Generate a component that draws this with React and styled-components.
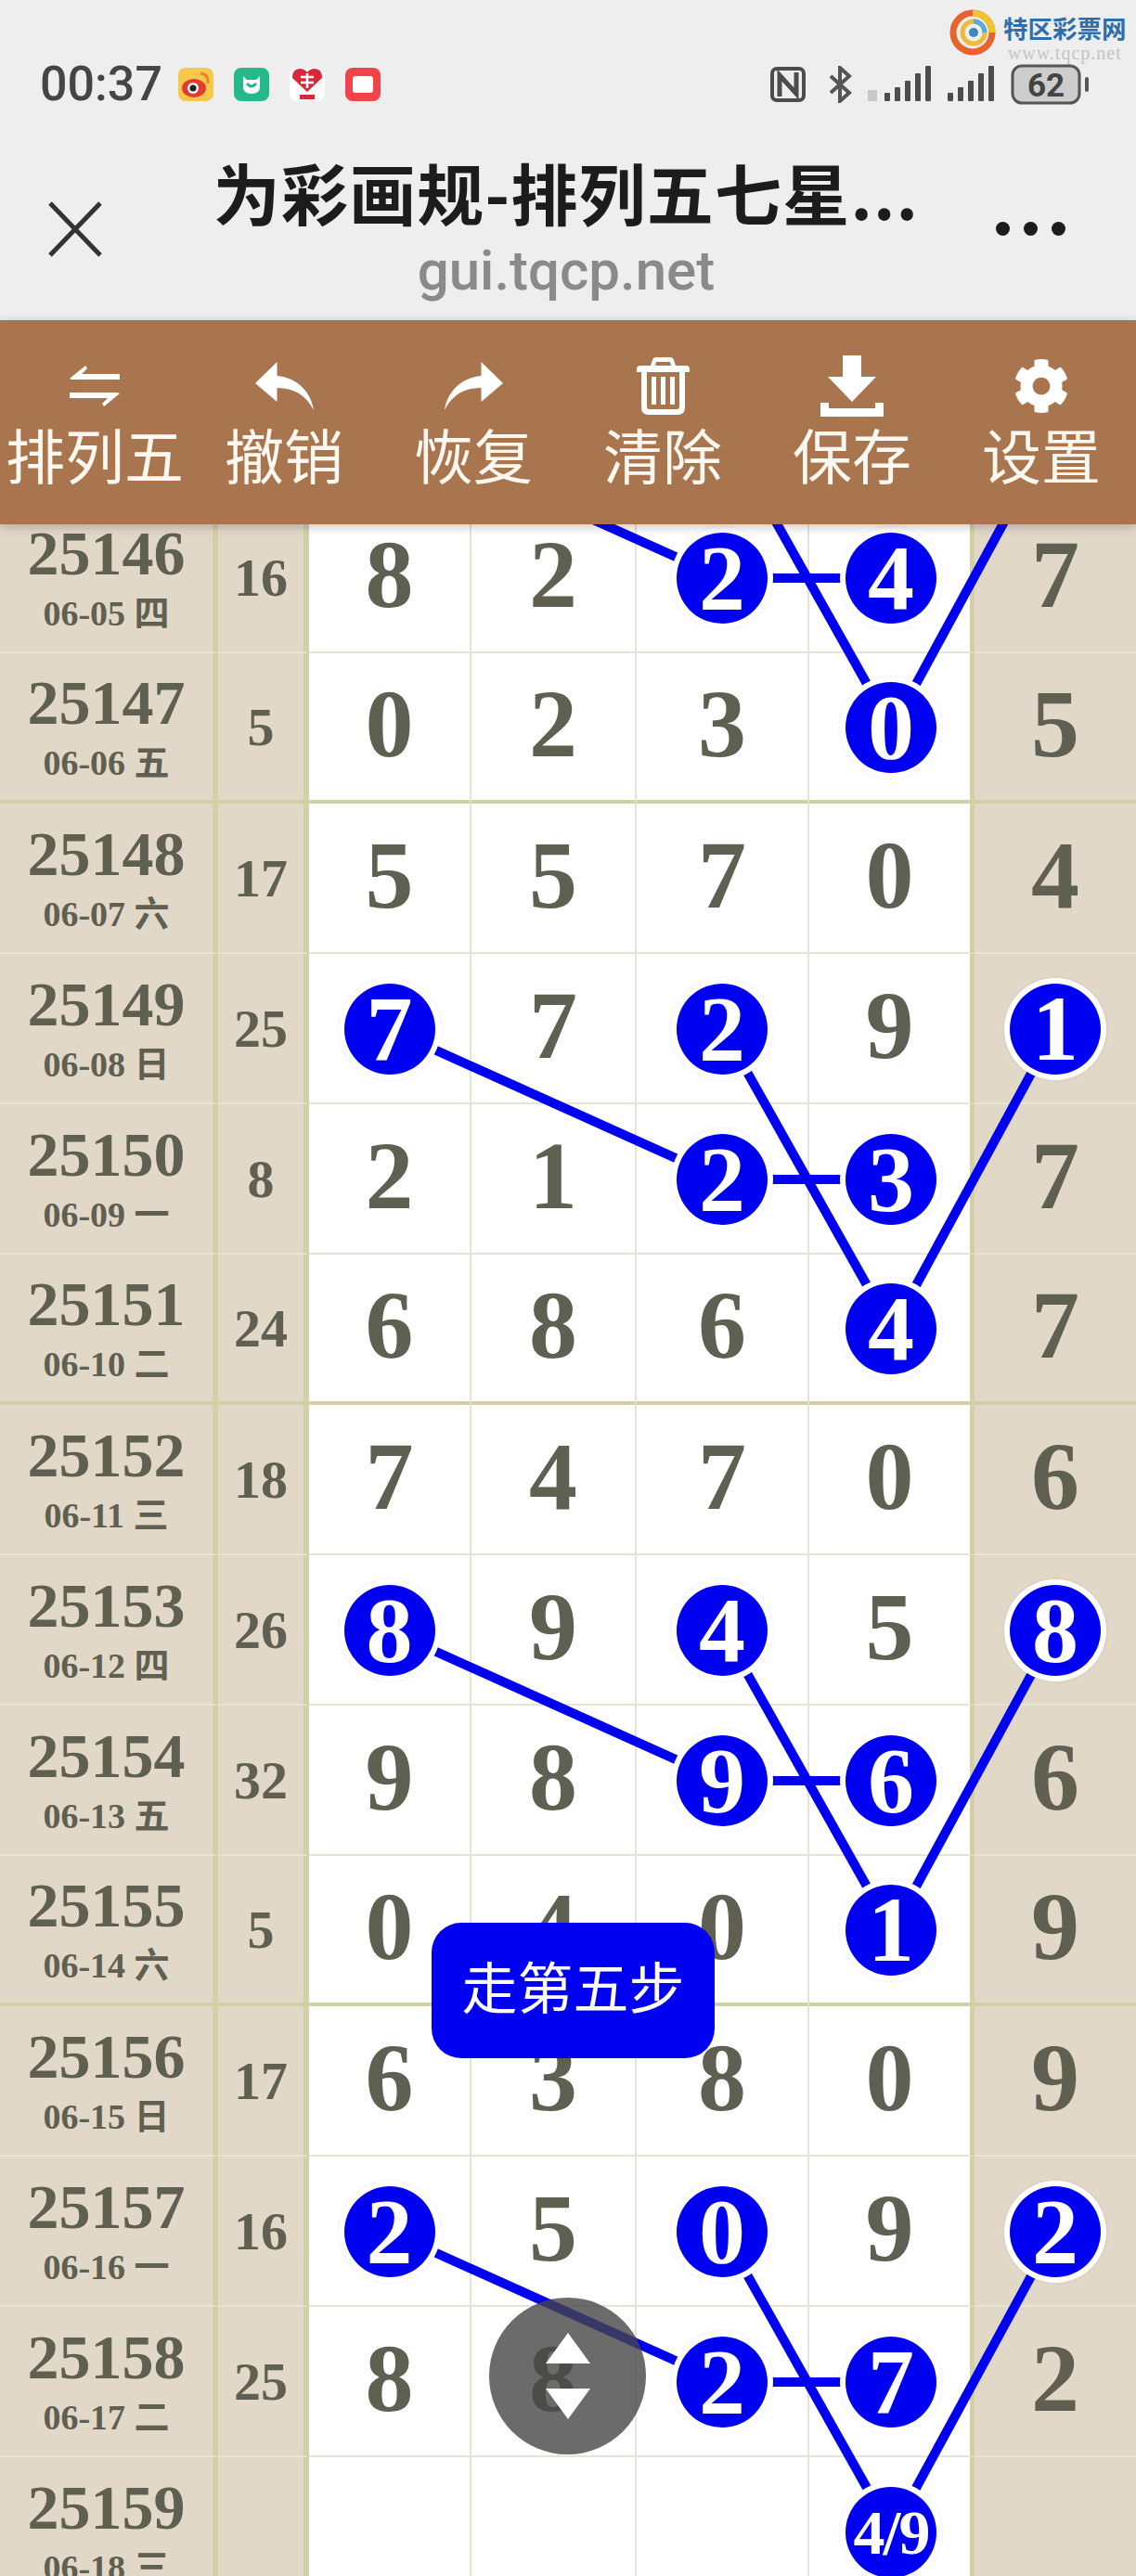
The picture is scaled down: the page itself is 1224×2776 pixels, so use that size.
import React from 'react';
import styled, { createGlobalStyle } from 'styled-components';
import { FaCog } from 'react-icons/fa';

const BLUE = '#0000f0';
const BEIGE = '#e2d8c8';
const INK = '#5f5f52';
const OLIVE = '#d3cfa6';
const SERIF = '"Liberation Serif", "Noto Sans CJK SC", serif';
const SANS = '"Noto Sans CJK SC", "Noto Sans", sans-serif';

const rows = [
  { no: '25146', date: '06-05 四', sum: '16', nums: ['8', '2', '*2', '*4', '7'] },
  { no: '25147', date: '06-06 五', sum: '5', nums: ['0', '2', '3', '*0', '5'], heavy: true },
  { no: '25148', date: '06-07 六', sum: '17', nums: ['5', '5', '7', '0', '4'] },
  { no: '25149', date: '06-08 日', sum: '25', nums: ['*7', '7', '*2', '9', '*1'] },
  { no: '25150', date: '06-09 一', sum: '8', nums: ['2', '1', '*2', '*3', '7'] },
  { no: '25151', date: '06-10 二', sum: '24', nums: ['6', '8', '6', '*4', '7'], heavy: true },
  { no: '25152', date: '06-11 三', sum: '18', nums: ['7', '4', '7', '0', '6'] },
  { no: '25153', date: '06-12 四', sum: '26', nums: ['*8', '9', '*4', '5', '*8'] },
  { no: '25154', date: '06-13 五', sum: '32', nums: ['9', '8', '*9', '*6', '6'] },
  { no: '25155', date: '06-14 六', sum: '5', nums: ['0', '4', '0', '*1', '9'], heavy: true },
  { no: '25156', date: '06-15 日', sum: '17', nums: ['6', '3', '8', '0', '9'] },
  { no: '25157', date: '06-16 一', sum: '16', nums: ['*2', '5', '*0', '9', '*2'] },
  { no: '25158', date: '06-17 二', sum: '25', nums: ['8', '8', '*2', '*7', '2'] },
  { no: '25159', date: '06-18 三', sum: '', nums: ['', '', '', '*4/9', ''] },
];

// chart coordinates, relative to the board
const ROW_H = 162;
const FIRST_ROW_TOP = -23;
const colX = { a: 419, c: 779, d: 961, e: 1137 };
const rowY = (i) => FIRST_ROW_TOP + ROW_H * i + ROW_H / 2;

// index of the row holding the top balls of each walk (-1 lies under the toolbar)
const walks = [-1, 3, 7, 11];

const GlobalStyle = createGlobalStyle`
  html, body {
    margin: 0;
    padding: 0;
    background: #fff;
  }
`;

const Page = styled.div`
  position: relative;
  display: flex;
  flex-direction: column;
  width: 1224px;
  height: 2776px;
  overflow: hidden;
`;

const Header = styled.header`
  height: 345px;
  box-sizing: border-box;
  background: #eeeeee;
  border-bottom: 5px solid #e9eef3;
`;

const StatusBar = styled.div`
  display: flex;
  justify-content: space-between;
  align-items: center;
  height: 44px;
  padding: 69px 51px 0 43px;
`;

const StatusGroup = styled.div`
  display: flex;
  align-items: center;
  gap: ${(p) => p.$gap || 22}px;
`;

const Clock = styled.span`
  font: 500 52px/44px Roboto, sans-serif;
  color: #454545;
  margin-right: -5px;
`;

const NfcIcon = styled.svg`
  margin-right: 8px;
`;

const Logo = styled.div`
  position: absolute;
  top: 10px;
  left: 1023px;
  display: flex;
  gap: 8px;
`;

const LogoText = styled.div`
  display: flex;
  flex-direction: column;
  align-items: center;
  padding-top: 5px;
  b {
    font: 700 26.5px/30px ${SANS};
    color: #2f6ea8;
  }
  span {
    font: 400 20px/20px ${SERIF};
    letter-spacing: 1px;
    color: #c4c4c4;
    margin-top: 2px;
  }
`;

const TitleBar = styled.div`
  display: grid;
  grid-template-columns: 120px 1fr 120px;
  align-items: center;
  padding-top: 52px;
`;

const CloseIcon = styled.svg`
  width: 58px;
  height: 60px;
  margin: 0 0 0 52px;
`;

const TitleBlock = styled.div`
  display: flex;
  flex-direction: column;
  align-items: center;
  margin-left: -4px;
`;

const Title = styled.div`
  font: 700 72px/82px ${SANS};
  color: #1c1c1c;
  white-space: nowrap;
  letter-spacing: 1.2px;
`;

const Domain = styled.div`
  margin-top: 9px;
  font: 500 60px/72px Roboto, sans-serif;
  color: #8a8a8a;
`;

const MoreDots = styled.div`
  display: flex;
  gap: 15px;
  justify-content: center;
  margin-left: -107px;
  i {
    width: 15px;
    height: 15px;
    border-radius: 50%;
    background: #1c1c1c;
  }
`;

const Toolbar = styled.nav`
  position: relative;
  z-index: 4;
  display: grid;
  grid-template-columns: repeat(6, 1fr);
  height: 220px;
  box-sizing: border-box;
  padding-top: 37px;
  background: #a9754f;
  box-shadow: 0 3px 10px rgba(0, 0, 0, 0.22);
`;

const ToolItem = styled.div`
  display: flex;
  flex-direction: column;
  align-items: center;
  color: #fff;
`;

const ToolIcon = styled.div`
  display: flex;
  align-items: center;
  justify-content: center;
  height: 68px;
  svg {
    display: block;
    fill: #fff;
  }
`;

const ToolLabel = styled.span`
  margin-top: 2px;
  font: 400 64px/72px ${SANS};
  color: #fff8f0;
  white-space: nowrap;
`;

const Board = styled.main`
  position: relative;
  flex: 1;
  overflow: hidden;
  background: #fff;
`;

const Grid = styled.div`
  margin-top: ${FIRST_ROW_TOP}px;
`;

const Row = styled.div`
  display: grid;
  grid-template-columns: 235px 98px 175px 178px 186px 178px 174px;
  height: ${ROW_H}px;
  > div {
    box-sizing: border-box;
    border-bottom: ${(p) => (p.$heavy ? `6px solid ${OLIVE}` : '2px solid #e6e4d6')};
    margin-bottom: ${(p) => (p.$heavy ? '-2px' : '0')};
    padding-top: 2px;
  }
`;

const IssueCell = styled.div`
  display: flex;
  flex-direction: column;
  align-items: center;
  justify-content: center;
  background: ${BEIGE};
  border-right: 6px solid ${OLIVE};
  color: ${INK};
  font-family: ${SERIF};
  font-weight: 700;
`;

const IssueNo = styled.span`
  font-size: 68px;
  line-height: 66px;
`;

const IssueDate = styled.span`
  margin-top: 10px;
  font-size: 38px;
  line-height: 44px;
  white-space: nowrap;
`;

const SumCell = styled.div`
  display: flex;
  align-items: center;
  justify-content: center;
  background: ${BEIGE};
  border-right: 6px solid ${OLIVE};
  color: ${INK};
  font: 700 58px/1 ${SERIF};
`;

const NumCell = styled.div`
  display: flex;
  align-items: center;
  justify-content: center;
  background: ${(p) => (p.$side ? BEIGE : '#fff')};
  border-right: ${(p) => (p.$side ? 'none' : p.$edge ? `5px solid ${OLIVE}` : '2px solid #e6e4d6')};
  color: ${INK};
  font: 700 104px/1 ${SERIF};
`;

const Digit = styled.span`
  margin-top: -8px;
`;

const Ball = styled.span`
  position: relative;
  z-index: 2;
  display: flex;
  align-items: center;
  justify-content: center;
  width: 98px;
  height: 98px;
  margin-right: ${(p) => (p.$onEdge ? '-3px' : '0')};
  border-radius: 50%;
  background: ${BLUE};
  color: #fff;
  font-size: ${(p) => (p.$small ? 68 : 100)}px;
  letter-spacing: ${(p) => (p.$small ? '-2px' : '0')};
  box-shadow: 0 0 0 6px #fff, 0 0 3px 7px rgba(0, 0, 0, 0.05);
`;

const ChartLines = styled.svg`
  position: absolute;
  top: 0;
  left: 0;
  z-index: 1;
  width: 1224px;
  height: 100%;
  line {
    stroke: ${BLUE};
    stroke-width: 10;
  }
`;

const StepTip = styled.div`
  position: absolute;
  left: 465px;
  top: 2072px;
  z-index: 5;
  display: flex;
  align-items: center;
  justify-content: center;
  box-sizing: border-box;
  width: 305px;
  height: 146px;
  padding-bottom: 12px;
  border-radius: 32px;
  background: ${BLUE};
  color: #fff;
  font: 400 60px/1 ${SANS};
`;

const ScrollButton = styled.div`
  position: absolute;
  left: 527px;
  top: 2476px;
  z-index: 6;
  display: flex;
  flex-direction: column;
  align-items: center;
  justify-content: center;
  gap: 27px;
  width: 169px;
  height: 169px;
  border-radius: 50%;
  background: rgba(70, 70, 70, 0.8);
`;

const Triangle = styled.i`
  width: 0;
  height: 0;
  border-left: 24px solid transparent;
  border-right: 24px solid transparent;
  ${(p) => (p.$down ? 'border-top: 33px solid #fff;' : 'border-bottom: 33px solid #fff;')}
`;

const AppTile = ({ bg, children }) => (
  <svg width="38" height="36" viewBox="0 0 38 36">
    <rect width="38" height="36" rx="8" fill={bg} />
    {children}
  </svg>
);

const SignalBars = ({ extra }) => (
  <svg width={extra ? 70 : 52} height="40" viewBox={`${extra ? -18 : 0} 0 ${extra ? 70 : 52} 40`} fill="#4c4c4c">
    {extra && <rect x="-18" y="26" width="10" height="12" fill="#c9c9c9" />}
    <rect x="0" y="29" width="6" height="9" rx="1" />
    <rect x="11" y="23" width="6" height="15" rx="1" />
    <rect x="22" y="16" width="6" height="22" rx="1" />
    <rect x="33" y="8" width="6" height="30" rx="1" />
    <rect x="44" y="0" width="6" height="38" rx="1" />
  </svg>
);

const ReplyIcon = ({ flip }) => (
  <svg width="63" height="52" viewBox="0 0 63 52" style={flip ? { transform: 'scaleX(-1)' } : undefined}>
    <path d="M0 23 L23.5 0 V15 C45 17 60 32 63 52 C55 36 42 28 23.5 28 V43 Z" />
  </svg>
);

const SwapIcon = () => (
  <svg width="54" height="44" viewBox="0 0 54 44">
    <path d="M0 14 L17 0 L19 3 L13 9 H54 V15 H2 Z" />
    <path d="M54 30 L37 44 L35 41 L41 35 H0 V29 H52 Z" />
  </svg>
);

const TrashIcon = () => (
  <svg width="57" height="62" viewBox="0 0 57 62">
    <path d="M17 3 Q18 0 21 0 H36 Q39 0 40 3 L42 9 H53 Q57 9 57 13 V16 H52 V54 Q52 62 44 62 H13 Q5 62 5 54 V16 H0 V13 Q0 9 4 9 H15 Z M21 5 L20 9 H37 L36 5 Z M11 16 V53 Q11 56 14 56 H43 Q46 56 46 53 V16 Z" fillRule="evenodd" />
    <rect x="16" y="21" width="5" height="30" />
    <rect x="26" y="21" width="5" height="30" />
    <rect x="36" y="21" width="5" height="30" />
  </svg>
);

const DownloadIcon = () => (
  <svg width="68" height="66" viewBox="0 0 68 66">
    <path d="M24 0 H44 V23 H60 L34 50 L8 23 H24 Z" />
    <path d="M0 51 H9 V57 H59 V51 H68 V66 H0 Z" />
  </svg>
);

const tools = [
  { label: '排列五', icon: <SwapIcon /> },
  { label: '撤销', icon: <ReplyIcon /> },
  { label: '恢复', icon: <ReplyIcon flip /> },
  { label: '清除', icon: <TrashIcon /> },
  { label: '保存', icon: <DownloadIcon /> },
  { label: '设置', icon: <FaCog size={60} /> },
];

const App = () => (
  <Page>
    <GlobalStyle />
    <Header>
      <StatusBar>
        <StatusGroup>
          <Clock>00:37</Clock>
          <AppTile bg="#f6c84c">
            <ellipse cx="17" cy="22" rx="13" ry="10" fill="#e33b2e" />
            <circle cx="16" cy="22" r="6" fill="#fff" />
            <circle cx="16" cy="22" r="3.5" fill="#222" />
            <path d="M24 6 Q33 7 32 17" stroke="#e8862a" strokeWidth="3" fill="none" />
          </AppTile>
          <AppTile bg="#25b98a">
            <path d="M10 9 L14 13 H24 L28 9 V21 Q28 28 19 28 Q10 28 10 21 Z" fill="#fff" />
            <path d="M14 17 Q19 23 24 17" stroke="#25b98a" strokeWidth="3" fill="none" />
          </AppTile>
          <AppTile bg="#fff">
            <path d="M19 26 L3 11 Q3 1 11 1 Q16 1 19 5 Q22 1 27 1 Q35 1 35 11 Z" fill="#d8283a" />
            <path d="M12 10 H26 M12 16 H26 M19 6 V22" stroke="#fff" strokeWidth="2.5" />
            <rect x="11" y="29" width="16" height="5" fill="#d8283a" />
          </AppTile>
          <AppTile bg="#f2434a">
            <rect x="8" y="9" width="22" height="18" rx="3" fill="#fff" />
          </AppTile>
        </StatusGroup>
        <StatusGroup $gap={16}>
          <NfcIcon width="38" height="38" viewBox="0 0 38 38" fill="none" stroke="#4c4c4c" strokeWidth="4">
            <rect x="2" y="2" width="34" height="34" rx="5" />
            <path d="M10 32 V9 L28 29 V6" strokeWidth="5" />
          </NfcIcon>
          <svg width="27" height="40" viewBox="0 0 27 40" fill="none" stroke="#555" strokeWidth="4">
            <path d="M3 11 L23 29 L13 38 V2 L23 11 L3 29" />
          </svg>
          <SignalBars extra />
          <SignalBars />
          <svg width="84" height="44" viewBox="0 0 84 44">
            <rect x="2" y="2" width="72" height="40" rx="10" fill="#cdcdcd" stroke="#555" strokeWidth="3" />
            <rect x="80" y="14" width="4" height="16" rx="2" fill="#555" />
            <text x="38" y="35" textAnchor="middle" fontFamily="Roboto, sans-serif" fontWeight="700" fontSize="35" fill="#444">62</text>
          </svg>
        </StatusGroup>
      </StatusBar>
      <Logo>
        <svg width="50" height="50" viewBox="0 0 50 50" fill="none">
          <circle cx="25" cy="25" r="21" stroke="#e8632c" strokeWidth="7" />
          <path d="M25 4 A21 21 0 0 1 46 25" stroke="#f2c230" strokeWidth="7" />
          <circle cx="26" cy="25" r="12" stroke="#f0b93a" strokeWidth="5" />
          <path d="M26 13 A12 12 0 0 1 38 25" stroke="#5aa9d8" strokeWidth="5" />
          <circle cx="26" cy="25" r="5" fill="#3e86c4" />
        </svg>
        <LogoText>
          <b>特区彩票网</b>
          <span>www.tqcp.net</span>
        </LogoText>
      </Logo>
      <TitleBar>
        <CloseIcon viewBox="0 0 58 60" fill="none" stroke="#333" strokeWidth="5">
          <path d="M2 2 L56 58 M56 2 L2 58" />
        </CloseIcon>
        <TitleBlock>
          <Title>为彩画规-排列五七星...</Title>
          <Domain>gui.tqcp.net</Domain>
        </TitleBlock>
        <MoreDots>
          <i />
          <i />
          <i />
        </MoreDots>
      </TitleBar>
    </Header>
    <Toolbar>
      {tools.map((t) => (
        <ToolItem key={t.label}>
          <ToolIcon>{t.icon}</ToolIcon>
          <ToolLabel>{t.label}</ToolLabel>
        </ToolItem>
      ))}
    </Toolbar>
    <Board>
      <Grid>
        {rows.map((r) => (
          <Row key={r.no} $heavy={r.heavy}>
            <IssueCell>
              <IssueNo>{r.no}</IssueNo>
              <IssueDate>{r.date}</IssueDate>
            </IssueCell>
            <SumCell>{r.sum}</SumCell>
            {r.nums.map((n, i) => (
              <NumCell key={i} $side={i === 4} $edge={i === 3}>
                {n.startsWith('*') ? <Ball $small={n.length > 2} $onEdge={i === 3}>{n.slice(1)}</Ball> : <Digit>{n}</Digit>}
              </NumCell>
            ))}
          </Row>
        ))}
      </Grid>
      <ChartLines>
        {walks.map((w) => (
          <g key={w}>
            <line x1={colX.a} y1={rowY(w)} x2={colX.c} y2={rowY(w + 1)} />
            <line x1={colX.c} y1={rowY(w)} x2={colX.d} y2={rowY(w + 2)} />
            <line x1={colX.e} y1={rowY(w)} x2={colX.d} y2={rowY(w + 2)} />
            <line x1={colX.c} y1={rowY(w + 1)} x2={colX.d} y2={rowY(w + 1)} />
          </g>
        ))}
      </ChartLines>
    </Board>
    <StepTip>走第五步</StepTip>
    <ScrollButton>
      <Triangle />
      <Triangle $down />
    </ScrollButton>
  </Page>
);

export default App;
